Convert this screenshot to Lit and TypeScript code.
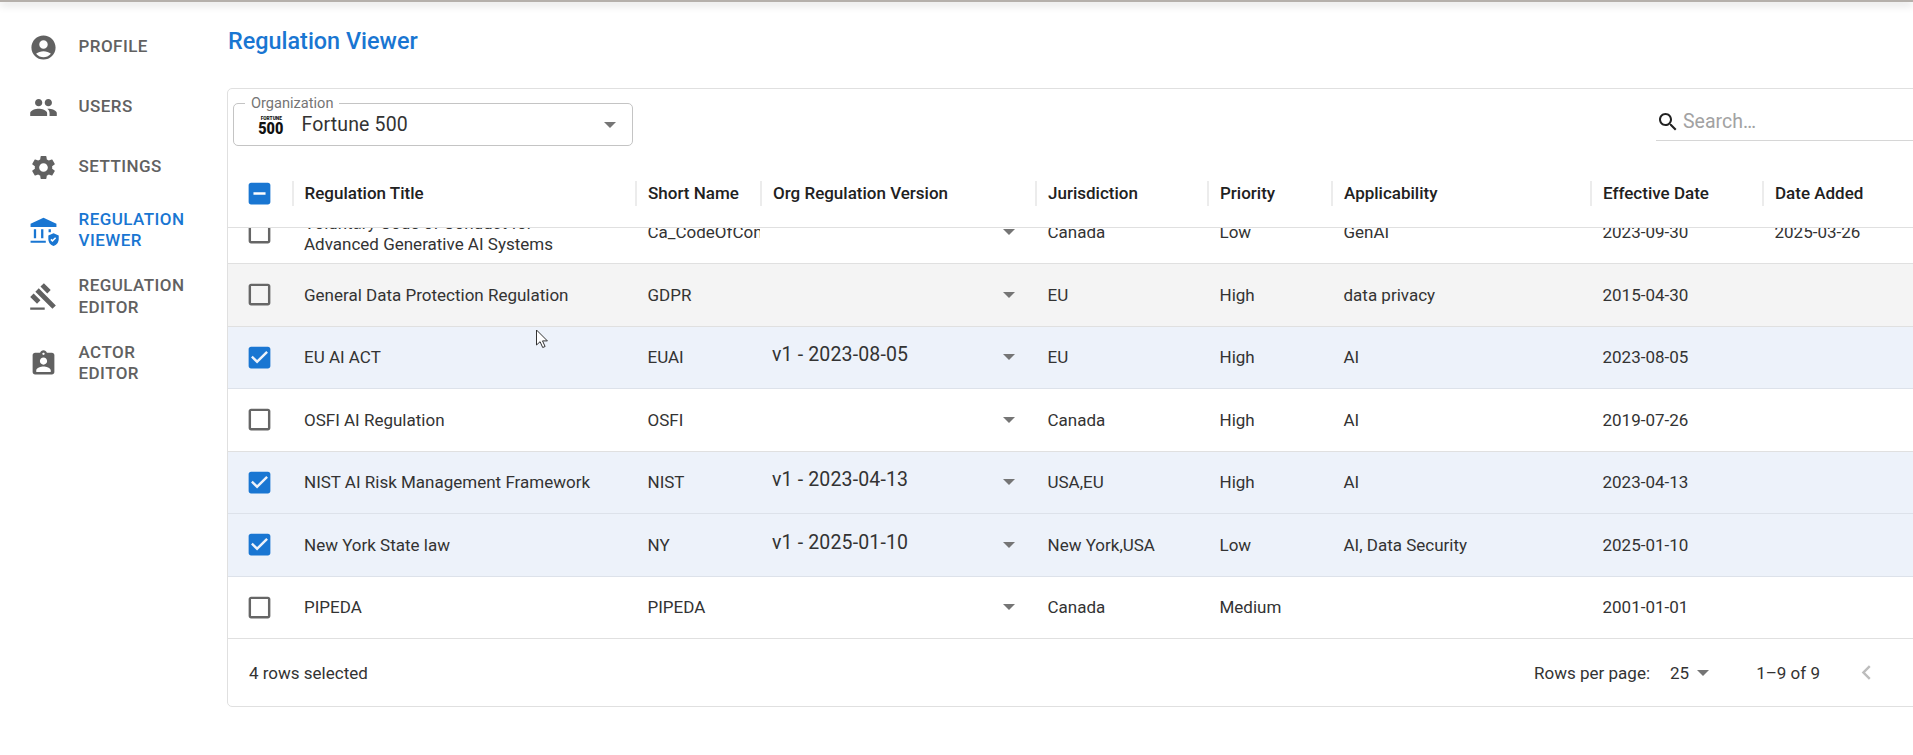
import { LitElement, html, css, svg } from "lit";
import { customElement } from "lit/decorators.js";

const ICONS = {
  profile: svg`<path d="M12 2C6.48 2 2 6.48 2 12s4.48 10 10 10 10-4.48 10-10S17.52 2 12 2zm0 4c1.93 0 3.5 1.57 3.5 3.5S13.93 13 12 13s-3.5-1.57-3.5-3.5S10.07 6 12 6zm0 14c-2.03 0-4.43-.82-6.14-2.88C7.55 15.8 9.68 15 12 15s4.45.8 6.14 2.12C16.43 19.18 14.03 20 12 20z"/>`,
  users: svg`<path d="M16 11c1.66 0 2.99-1.34 2.99-3S17.66 5 16 5c-1.66 0-3 1.34-3 3s1.34 3 3 3zm-8 0c1.66 0 2.99-1.34 2.99-3S9.66 5 8 5C6.34 5 5 6.34 5 8s1.34 3 3 3zm0 2c-2.33 0-7 1.17-7 3.5V19h14v-2.5c0-2.33-4.67-3.5-7-3.5zm8 0c-.29 0-.62.02-.97.05 1.16.84 1.97 1.97 1.97 3.45V19h6v-2.5c0-2.33-4.67-3.5-7-3.5z"/>`,
  settings: svg`<path d="M19.14 12.94c.04-.3.06-.61.06-.94 0-.32-.02-.64-.07-.94l2.03-1.58c.18-.14.23-.41.12-.61l-1.92-3.32c-.12-.22-.37-.29-.59-.22l-2.39.96c-.5-.38-1.03-.7-1.62-.94l-.36-2.54c-.04-.24-.24-.41-.48-.41h-3.84c-.24 0-.43.17-.47.41l-.36 2.54c-.59.24-1.13.57-1.62.94l-2.39-.96c-.22-.08-.47 0-.59.22L2.74 8.87c-.12.21-.08.47.12.61l2.03 1.58c-.05.3-.09.63-.09.94s.02.64.07.94l-2.03 1.58c-.18.14-.23.41-.12.61l1.92 3.32c.12.22.37.29.59.22l2.39-.96c.5.38 1.03.7 1.62.94l.36 2.54c.05.24.24.41.48.41h3.84c.24 0 .44-.17.47-.41l.36-2.54c.59-.24 1.13-.56 1.62-.94l2.39.96c.22.08.47 0 .59-.22l1.92-3.32c.12-.22.07-.47-.12-.61l-2.01-1.58zM12 15.6c-1.98 0-3.6-1.62-3.6-3.6s1.62-3.6 3.6-3.6 3.6 1.62 3.6 3.6-1.62 3.6-3.6 3.6z"/>`,
  viewer: svg`<path d="M12 1.4 1.3 6.4V9h21.4V6.4z"/><path d="M4 11h1.9v7.4H4zM10 11h1.9v7.4H10zM16.2 11h1.9v2.4h-1.9zM1.3 20.4h12.6v1.7H1.3z"/><path d="M20.3 14.2l-4.3 1.9v2.9c0 2.7 1.8 5.1 4.3 5.8 2.5-.7 4.3-3.1 4.3-5.8v-2.9zm-.9 7.3-1.7-1.7.9-.9.8.8 2.2-2.2.9.9z"/>`,
  editor: svg`<path d="M1 21h12v2H1zM5.245 8.07l2.83-2.827 14.14 14.142-2.828 2.828zM12.317 1l5.657 5.656-2.83 2.83-5.654-5.66zM3.825 9.485l5.657 5.657-2.828 2.828-5.657-5.657z"/>`,
  actor: svg`<path d="M19 3h-4.18C14.4 1.84 13.3 1 12 1c-1.3 0-2.4.84-2.82 2H5c-1.1 0-2 .9-2 2v14c0 1.1.9 2 2 2h14c1.1 0 2-.9 2-2V5c0-1.1-.9-2-2-2zm-7 0c.55 0 1 .45 1 1s-.45 1-1 1-1-.45-1-1 .45-1 1-1zm0 4c1.66 0 3 1.34 3 3s-1.34 3-3 3-3-1.34-3-3 1.34-3 3-3zm6 12H6v-1.4c0-2 4-3.1 6-3.1s6 1.1 6 3.1V19z"/>`,
};
const BOX = {
  blank: "M19 5v14H5V5h14m0-2H5c-1.1 0-2 .9-2 2v14c0 1.1.9 2 2 2h14c1.1 0 2-.9 2-2V5c0-1.1-.9-2-2-2z",
  checked: "M19 3H5c-1.11 0-2 .9-2 2v14c0 1.1.89 2 2 2h14c1.11 0 2-.89 2-2V5c0-1.1-.89-2-2-2zm-9 14l-5-5 1.41-1.41L10 14.17l7.59-7.59L19 8l-9 9z",
  mixed: "M19 3H5c-1.1 0-2 .9-2 2v14c0 1.1.9 2 2 2h14c1.1 0 2-.9 2-2V5c0-1.1-.9-2-2-2zm-2 10H7v-2h10v2z",
};

const NAV = [
  { icon: "profile", label: "Profile" },
  { icon: "users", label: "Users" },
  { icon: "settings", label: "Settings" },
  { icon: "viewer", label: "Regulation Viewer", two: true, active: true },
  { icon: "editor", label: "Regulation Editor", two: true },
  { icon: "actor", label: "Actor Editor", two: true },
];
const HEAD = ["Regulation Title", "Short Name", "Org Regulation Version", "Jurisdiction", "Priority", "Applicability", "Effective Date", "Date Added"];
const ROWS = [
  { t: "Voluntary Code of Conduct for Advanced Generative AI Systems", s: "Ca_CodeOfConduct", v: "", j: "Canada", p: "Low", a: "GenAI", e: "2023-09-30", d: "2025-03-26", wrap: true },
  { t: "General Data Protection Regulation", s: "GDPR", v: "", j: "EU", p: "High", a: "data privacy", e: "2015-04-30", d: "", hover: true },
  { t: "EU AI ACT", s: "EUAI", v: "v1 - 2023-08-05", j: "EU", p: "High", a: "AI", e: "2023-08-05", d: "", sel: true },
  { t: "OSFI AI Regulation", s: "OSFI", v: "", j: "Canada", p: "High", a: "AI", e: "2019-07-26", d: "" },
  { t: "NIST AI Risk Management Framework", s: "NIST", v: "v1 - 2023-04-13", j: "USA,EU", p: "High", a: "AI", e: "2023-04-13", d: "", sel: true },
  { t: "New York State law", s: "NY", v: "v1 - 2025-01-10", j: "New York,USA", p: "Low", a: "AI, Data Security", e: "2025-01-10", d: "", sel: true },
  { t: "PIPEDA", s: "PIPEDA", v: "", j: "Canada", p: "Medium", a: "", e: "2001-01-01", d: "" },
];

@customElement("app-root")
export class AppRoot extends LitElement {
  static styles = css`
    :host { display: block; position: relative; width: 1913px; height: 755px; overflow: hidden; background: #fff; font-family: Roboto, sans-serif; color: #333; }
    .topbar { height: 2px; background: #b5b0ab; box-shadow: 0 2px 9px rgba(0,0,0,.32); }
    .layout { display: flex; }
    nav { width: 227px; flex: none; padding-top: 15px; display: flex; flex-direction: column; }
    .item { display: flex; align-items: center; height: 60px; padding-left: 29px; gap: 20.5px; color: #616161; }
    .item.two { height: 66.5px; }
    .item.active { color: #1976d2; }
    .item svg { width: 29px; height: 29px; fill: currentColor; flex: none; overflow: visible; }
    .item span { width: 120px; font-size: 17px; font-weight: 500; line-height: 21.6px; text-transform: uppercase; letter-spacing: .45px; }
    main { flex: none; width: 1720px; }
    h1 { margin: 0; height: 86px; display: flex; align-items: center; padding: 0 0 8px 1px; box-sizing: border-box; font-size: 23.4px; font-weight: 500; color: #1976d2; }
    .card { border: 1px solid #e0e0e0; border-radius: 5px; width: 1720px; box-sizing: border-box; }
    .toolbar { display: flex; align-items: flex-start; height: 70.5px; padding: 14px 0 0 5px; box-sizing: border-box; }
    .select { position: relative; width: 400px; height: 43px; box-sizing: border-box; border: 1px solid #c4c4c4; border-radius: 5px; display: flex; align-items: center; padding-left: 25px; }
    .select label { position: absolute; left: 11px; top: -10px; padding: 0 6px; background: #fff; font-size: 14.6px; line-height: 18px; color: #757575; }
    .logo { width: 24px; display: flex; flex-direction: column; align-items: center; color: #111; margin-right: 18.5px; font-weight: 900; }
    .logo b { font-size: 6px; line-height: 6px; letter-spacing: 0; transform: scaleX(.8); }
    .logo i { font-style: normal; font-size: 17px; line-height: 14px; transform: scaleX(.85); }
    .select .val { font-size: 19.5px; color: #333; flex: 1; letter-spacing: .15px; }
    .tri { width: 0; height: 0; border-left: 6.5px solid transparent; border-right: 6.5px solid transparent; border-top: 6.5px solid #757575; flex: none; }
    .select .tri { margin-right: 16px; }
    .search { margin-left: auto; width: 290px; height: 38px; box-sizing: border-box; border-bottom: 1px solid #d6d6d6; display: flex; align-items: center; padding-left: 0; color: #a2a2a2; font-size: 19.5px; gap: 3px; }
    .search svg { width: 24px; height: 24px; fill: #222; margin-left: 0; flex: none; }
    .grid { display: grid; grid-template-columns: 63.5px 343.5px 125px 275px 172px 124px 259px 172px 1fr; }
    .head { height: 68.5px; align-items: center; border-bottom: 1px solid #e0e0e0; box-sizing: border-box; font-size: 17px; font-weight: 500; color: #212121; }
    .hc { display: flex; align-items: center; white-space: nowrap; gap: 11px; }
    .sep { width: 2px; height: 25px; background: #ececec; flex: none; }
    .cb { display: flex; justify-content: center; align-items: center; }
    .cb svg { width: 29px; height: 29px; fill: #666; }
    .cb svg.on { fill: #1976d2; }
    .scroller { height: 411.5px; overflow: hidden; }
    .rows { margin-top: -26.5px; }
    .row { height: 62.5px; box-sizing: border-box; border-bottom: 1px solid #e0e0e0; align-items: center; font-size: 17px; color: #333; }
    .row.hover { background: #f4f4f4; }
    .row.sel { background: #edf2fa; border-bottom-color: #dde2ea; }
    .cell { padding-left: 12.5px; white-space: nowrap; overflow: hidden; }
    .cell.wrap { white-space: normal; line-height: 21px; padding-top: 3px; max-width: 290px; overflow: visible; }
    .ver { display: flex; align-items: center; height: 100%; padding-left: 12px; padding-right: 20px; }
    .ver span { flex: 1; font-size: 19.5px; position: relative; top: -2.5px; letter-spacing: .15px; white-space: nowrap; }
    .ver .tri { border-left-width: 6px; border-right-width: 6px; border-top-width: 6px; margin-right: 0; }
    .foot { height: 66.5px; display: flex; align-items: center; padding-left: 21px; font-size: 17px; color: #333; }
    .pager { margin-left: auto; display: flex; align-items: center; padding-right: 65px; }
    .pager .per { font-size: 17px; }
    .pager .n { margin-left: 20px; font-size: 17px; }
    .pager .tri { margin-left: 8px; border-left-width: 6px; border-right-width: 6px; border-top-width: 6px; }
    .pager .range { margin-left: 47px; }
    .pager svg { margin-left: 32px; width: 29px; height: 29px; fill: #bdbdbd; }
    .cursor { position: absolute; left: 535px; top: 329px; width: 14px; height: 20px; }
  `;

  private box(kind: "blank" | "checked" | "mixed") {
    return html`<svg class=${kind === "blank" ? "" : "on"} viewBox="0 0 24 24"><path d=${BOX[kind]}></path></svg>`;
  }

  render() {
    return html`
      <div class="topbar"></div>
      <div class="layout">
        <nav>
          ${NAV.map(n => html`
            <div class="item ${n.two ? "two" : ""} ${n.active ? "active" : ""}">
              <svg viewBox="0 0 24 24">${ICONS[n.icon as keyof typeof ICONS]}</svg>
              <span>${n.label}</span>
            </div>`)}
        </nav>
        <main>
          <h1>Regulation Viewer</h1>
          <div class="card">
            <div class="toolbar">
              <div class="select">
                <label>Organization</label>
                <div class="logo"><b>FORTUNE</b><i>500</i></div>
                <span class="val">Fortune 500</span>
                <span class="tri"></span>
              </div>
              <div class="search">
                <svg viewBox="0 0 24 24"><path d="M15.5 14h-.79l-.28-.27C15.41 12.59 16 11.11 16 9.5 16 5.91 13.09 3 9.5 3S3 5.91 3 9.5 5.91 16 9.5 16c1.61 0 3.09-.59 4.23-1.57l.27.28v.79l5 4.99L20.49 19l-4.99-5zm-6 0C7.01 14 5 11.99 5 9.5S7.01 5 9.5 5 14 7.01 14 9.5 11.99 14 9.5 14z"></path></svg>
                <span>Search…</span>
              </div>
            </div>
            <div class="grid head">
              <div class="cb">${this.box("mixed")}</div>
              ${HEAD.map(h => html`<div class="hc"><span class="sep"></span><span>${h}</span></div>`)}
            </div>
            <div class="scroller">
              <div class="rows">
                ${ROWS.map(r => html`
                  <div class="grid row ${r.sel ? "sel" : ""} ${r.hover ? "hover" : ""}">
                    <div class="cb">${this.box(r.sel ? "checked" : "blank")}</div>
                    <div class="cell ${r.wrap ? "wrap" : ""}">${r.t}</div>
                    <div class="cell">${r.s}</div>
                    <div class="ver"><span>${r.v}</span><i class="tri"></i></div>
                    <div class="cell">${r.j}</div>
                    <div class="cell">${r.p}</div>
                    <div class="cell">${r.a}</div>
                    <div class="cell">${r.e}</div>
                    <div class="cell">${r.d}</div>
                  </div>`)}
              </div>
            </div>
            <div class="foot">
              <span>4 rows selected</span>
              <div class="pager">
                <span class="per">Rows per page:</span>
                <span class="n">25</span>
                <i class="tri"></i>
                <span class="range">1–9 of 9</span>
                <svg viewBox="0 0 24 24"><path d="M15.41 7.41 14 6l-6 6 6 6 1.41-1.41L10.83 12z"></path></svg>
              </div>
            </div>
          </div>
        </main>
      </div>
      <svg class="cursor" viewBox="0 0 14 20"><path d="M1.5 1v15l3.6-3.3 2.6 5.8 2.4-1-2.6-5.6h4.9z" fill="#fff" stroke="#333" stroke-width="1"></path></svg>
    `;
  }
}
